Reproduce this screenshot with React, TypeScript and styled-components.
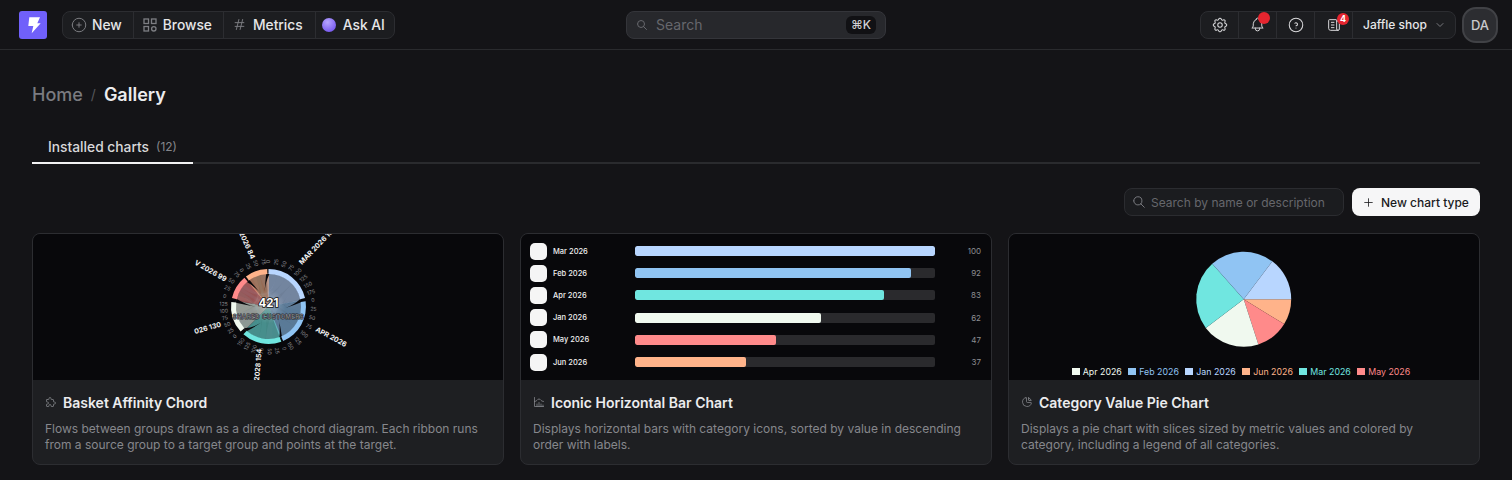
import React from 'react'
import styled, { createGlobalStyle } from 'styled-components'
import {
  TbBell,
  TbChartHistogram,
  TbChartPie,
  TbChevronDown,
  TbCirclePlus,
  TbHash,
  TbHelpCircle,
  TbNews,
  TbPlus,
  TbPuzzle,
  TbSearch,
  TbSettings,
} from 'react-icons/tb'

const GlobalStyle = createGlobalStyle`
  html, body {
    margin: 0;
    height: 100%;
    background: #141417;
    overflow: hidden;
  }
  body {
    font-family: Inter, "Liberation Sans", sans-serif;
    color: #e8e8ea;
  }
  * {
    box-sizing: border-box;
  }
`

const Header = styled.header`
  display: grid;
  grid-template-columns: 1fr 260px 1fr;
  align-items: center;
  height: 50px;
  padding: 0 14px;
  border-bottom: 1px solid #2a2b2e;
`

const HeaderLeft = styled.div`
  display: flex;
  align-items: center;
  gap: 15px;
  padding-left: 5px;
`

const HeaderRight = styled.div`
  display: flex;
  align-items: center;
  justify-content: flex-end;
  gap: 6px;
`

const Logo = styled.div`
  width: 28px;
  height: 28px;
  border-radius: 3px;
  background: #7060fa;
  svg {
    display: block;
  }
`

const ButtonGroup = styled.div`
  display: flex;
  height: 28px;
  border: 1px solid #2c2d31;
  border-radius: 8px;
  background: #1c1d20;
`

const NavButton = styled.div<{ $pad: string; $gap: number }>`
  display: flex;
  align-items: center;
  gap: ${( { $gap } ) => $gap}px;
  padding: ${( { $pad } ) => $pad};
  font-size: 13.8px;
  font-weight: 500;
  color: #e6e6e8;
  white-space: nowrap;
  & + & {
    border-left: 1px solid #2c2d31;
  }
  svg {
    flex: none;
    color: #7d7e83;
  }
`

const AiDot = styled.span`
  width: 14px;
  height: 14px;
  border-radius: 50%;
  background: radial-gradient(circle at 40% 30%, #b7a6ff, #7a5cf0 75%);
`

const IconButton = styled.div`
  position: relative;
  display: flex;
  align-items: center;
  justify-content: center;
  width: 38px;
  color: #d8d8da;
  &:first-child {
    width: 37px;
  }
  & + & {
    border-left: 1px solid #2c2d31;
  }
`

const RedDot = styled.span`
  position: absolute;
  top: 0;
  right: 6px;
  display: flex;
  align-items: center;
  justify-content: center;
  width: 12px;
  height: 12px;
  border-radius: 50%;
  background: #e5252f;
  color: #fff;
  font-size: 9px;
  font-weight: 700;
`

const CountBadge = styled( RedDot )`
  top: 1px;
  right: 3px;
`

const ProjectPicker = styled.div`
  display: flex;
  align-items: center;
  width: 103px;
  padding: 0 0 0 10px;
  border-left: 1px solid #2c2d31;
  font-size: 12px;
  font-weight: 500;
  color: #e6e6e8;
  white-space: nowrap;
  svg {
    margin-left: 7px;
    color: #77787d;
  }
`

const Avatar = styled.div`
  display: flex;
  align-items: center;
  justify-content: center;
  width: 36px;
  height: 36px;
  border: 2px solid #414246;
  border-radius: 14px;
  background: #2c2d31;
  color: #c9c9cc;
  font-size: 13px;
  font-weight: 500;
`

const GlobalSearch = styled.div`
  display: flex;
  align-items: center;
  height: 28px;
  padding: 0 9px 0 9px;
  border: 1px solid #34353a;
  border-radius: 8px;
  background: #27282c;
  color: #66676c;
  font-size: 14px;
  svg {
    margin-right: 8px;
  }
`

const Kbd = styled.span`
  display: flex;
  align-items: center;
  justify-content: center;
  width: 30px;
  height: 18px;
  margin-left: auto;
  border-radius: 6px;
  background: #111114;
  color: #d0d0d3;
  font-size: 12px;
  font-weight: 500;
`

const Main = styled.main`
  padding: 32px 32px 0;
`

const Breadcrumb = styled.div`
  display: flex;
  align-items: center;
  height: 24px;
  font-size: 18px;
  font-weight: 500;
  color: #7a7b80;
`

const Crumbsep = styled.span`
  margin: 0 8px 0 8px;
  font-size: 14px;
  font-weight: 400;
  color: #55565a;
`

const CrumbActive = styled.span`
  font-weight: 600;
  color: #ececee;
`

const Tabs = styled.div`
  display: flex;
  margin-top: 24px;
  border-bottom: 2px solid #2a2b2e;
`

const Tab = styled.div`
  display: flex;
  align-items: center;
  gap: 7px;
  height: 34px;
  margin-bottom: -2px;
  padding: 1px 16px 0 16px;
  border-bottom: 2px solid #f2f2f3;
  font-size: 13.8px;
  font-weight: 500;
  color: #d8d8da;
`

const TabCount = styled.span`
  font-size: 12px;
  font-weight: 400;
  color: #85868b;
`

const Toolbar = styled.div`
  display: flex;
  justify-content: flex-end;
  gap: 8px;
  margin-top: 24px;
`

const SearchField = styled.div`
  display: flex;
  align-items: center;
  gap: 5px;
  width: 220px;
  height: 28px;
  padding: 0 7px;
  border: 1px solid #2b2c30;
  border-radius: 8px;
  background: #1b1c1f;
  color: #66676c;
  font-size: 12px;
  svg {
    color: #85868b;
  }
`

const PrimaryButton = styled.div`
  display: flex;
  align-items: center;
  gap: 6px;
  width: 128px;
  height: 28px;
  padding-left: 10px;
  border-radius: 8px;
  background: #f6f6f7;
  color: #1a1a1d;
  font-size: 12px;
  font-weight: 500;
`

const CardGrid = styled.div`
  display: grid;
  grid-template-columns: repeat(3, 1fr);
  gap: 16px;
  margin-top: 17px;
`

const Card = styled.article`
  height: 232px;
  overflow: hidden;
  border: 1px solid #2c2d31;
  border-radius: 8px;
  background: #1e1f22;
`

const Preview = styled.div`
  display: flex;
  flex-direction: column;
  height: 146px;
  background: #08080b;
  overflow: hidden;
`

const CardBody = styled.div`
  padding: 13px 12px 0;
`

const CardTitle = styled.h3`
  display: flex;
  align-items: center;
  gap: 6px;
  height: 18px;
  margin: 0;
  font-size: 14px;
  font-weight: 600;
  color: #ececee;
  svg {
    color: #8a8b90;
  }
`

const CardText = styled.p`
  margin: 10px 0 0;
  font-size: 12px;
  line-height: 16px;
  color: #86878c;
`

const BarRows = styled.div`
  padding: 6px 10px 0 9px;
`

const BarRow = styled.div`
  display: grid;
  grid-template-columns: 17px 76px 300px 1fr;
  column-gap: 6px;
  align-items: center;
  height: 22.2px;
`

const BarIcon = styled.span`
  height: 17px;
  border-radius: 5px;
  background: #f5f5f5;
`

const BarLabel = styled.span`
  font-size: 7.5px;
  font-weight: 500;
  color: #f0f0f0;
`

const BarTrack = styled.div`
  height: 10px;
  border-radius: 2px;
  background: #2a2a2d;
  overflow: hidden;
`

const BarFill = styled.div<{ $color: string }>`
  height: 100%;
  border-radius: 2px;
  background: ${( { $color } ) => $color};
`

const BarValue = styled.span`
  font-size: 8px;
  text-align: right;
  color: #8d8e92;
`

const ChartSvg = styled.svg`
  flex: none;
  display: block;
`

const Legend = styled.div`
  display: flex;
  justify-content: center;
  gap: 6.5px;
  margin-right: 6px;
  margin-top: 2px;
`

const LegendItem = styled.span<{ $color: string }>`
  display: flex;
  align-items: center;
  gap: 3px;
  font-size: 8.8px;
  color: ${( { $color } ) => $color};
  &::before {
    content: '';
    width: 8px;
    height: 7px;
    background: ${( { $color } ) => $color};
  }
`

const LIGHT = '#b8d6ff'
const BLUE = '#90c4f3'
const TEAL = '#70e6e0'
const WHITE = '#f0f9ef'
const RED = '#ff8a8a'
const ORANGE = '#ffb38a'

const BARS = [
  { label: 'Mar 2026', value: 100, color: LIGHT },
  { label: 'Feb 2026', value: 92, color: BLUE },
  { label: 'Apr 2026', value: 83, color: TEAL },
  { label: 'Jan 2026', value: 62, color: WHITE },
  { label: 'May 2026', value: 47, color: RED },
  { label: 'Jun 2026', value: 37, color: ORANGE },
]

const LEGEND = [
  { label: 'Apr 2026', color: WHITE },
  { label: 'Feb 2026', color: BLUE },
  { label: 'Jan 2026', color: LIGHT },
  { label: 'Jun 2026', color: ORANGE },
  { label: 'Mar 2026', color: TEAL },
  { label: 'May 2026', color: RED },
]

// angles are degrees clockwise from 12 o'clock
function polar ( r: number, deg: number, cx = 0, cy = 0 ) {
  const a = ( ( deg - 90 ) * Math.PI ) / 180
  return { x: cx + r * Math.cos( a ), y: cy + r * Math.sin( a ) }
}

function arcPath ( r0: number, r1: number, a0: number, a1: number ) {
  const p0 = polar( r1, a0 )
  const p1 = polar( r1, a1 )
  const p2 = polar( r0, a1 )
  const p3 = polar( r0, a0 )
  const large = a1 - a0 > 180 ? 1 : 0
  return `M${p0.x} ${p0.y}A${r1} ${r1} 0 ${large} 1 ${p1.x} ${p1.y}L${p2.x} ${p2.y}A${r0} ${r0} 0 ${large} 0 ${p3.x} ${p3.y}Z`
}

function sectorPath ( r: number, a0: number, a1: number ) {
  const p0 = polar( r, a0 )
  const p1 = polar( r, a1 )
  return `M0 0L${p0.x} ${p0.y}A${r} ${r} 0 0 1 ${p1.x} ${p1.y}Z`
}

const GROUPS = [
  { a0: 0, a1: 77, color: LIGHT, max: 175 },
  { a0: 82, a1: 157, color: BLUE, max: 150 },
  { a0: 160, a1: 222, color: TEAL, max: 150 },
  { a0: 228, a1: 277, color: WHITE, max: 125 },
  { a0: 283, a1: 320, color: RED, max: 75 },
  { a0: 323, a1: 358, color: ORANGE, max: 75 },
]

// black wedges between the groups: angle at the ring and the point the tip leans to
const WEDGES = [
  { deg: 359, half: 3, tipR: 15, tipDeg: 345 },
  { deg: 79.5, half: 3, tipR: 17, tipDeg: 95 },
  { deg: 158.5, half: 2.5, tipR: 15, tipDeg: 140 },
  { deg: 225, half: 3.5, tipR: 18, tipDeg: 205 },
  { deg: 280, half: 3.5, tipR: 12, tipDeg: 268 },
  { deg: 321.5, half: 3, tipR: 14, tipDeg: 330 },
]

function wedgePath ( w: { deg: number; half: number; tipR: number; tipDeg: number } ) {
  const a = polar( 33, w.deg - w.half )
  const b = polar( 33, w.deg + w.half )
  const tip = polar( w.tipR, w.tipDeg )
  const mid = polar( ( w.tipR + 33 ) / 2, ( w.deg + w.tipDeg ) / 2 )
  return `M${a.x} ${a.y}Q${mid.x} ${mid.y} ${tip.x} ${tip.y}Q${mid.x} ${mid.y} ${b.x} ${b.y}Z`
}

function ribbons () {
  const n = GROUPS.length
  const part = ( g: number, other: number ) => {
    const slot = ( other - g + n ) % n // 1..5, nearest clockwise neighbour sits at the arc's end
    const { a0, a1 } = GROUPS[ g ]
    const w = ( a1 - a0 ) / ( n - 1 )
    return [ a1 - slot * w, a1 - ( slot - 1 ) * w ]
  }
  const out: { d: string; color: string }[] = []
  for ( let i = 0; i < n; i++ ) {
    for ( let j = i + 1; j < n; j++ ) {
      const [ s0, s1 ] = part( i, j )
      const [ t0, t1 ] = part( j, i )
      const R = 33
      const p0 = polar( R, s0 )
      const p1 = polar( R, s1 )
      const p2 = polar( R, t0 )
      const p3 = polar( R, t1 )
      out.push( {
        d: `M${p0.x} ${p0.y}A${R} ${R} 0 0 1 ${p1.x} ${p1.y}Q0 0 ${p2.x} ${p2.y}A${R} ${R} 0 0 1 ${p3.x} ${p3.y}Q0 0 ${p0.x} ${p0.y}Z`,
        color: GROUPS[ i ].color,
      } )
    }
  }
  return out
}

function ticks () {
  const out: { deg: number; label: number }[] = []
  GROUPS.forEach( ( g ) => {
    const step = ( ( g.a1 - g.a0 ) * 25 ) / ( g.max + 12 )
    for ( let v = 0; v <= g.max; v += 25 ) {
      out.push( { deg: g.a0 + ( v / 25 ) * step, label: v } )
    }
  } )
  return out
}

const OUTER_LABELS = [
  { text: 'MAR 2026 100', x: 302, y: 265, rot: -46 },
  { text: 'APR 2026', x: 315, y: 331, rot: 28 },
  { text: '2028 154', x: 259, y: 381, rot: -85 },
  { text: '026 130', x: 195, y: 334, rot: -16 },
  { text: 'V 2026 99', x: 194, y: 264, rot: 30 },
  { text: '2026 84', x: 239, y: 233, rot: 66 },
]

function ChordChart () {
  // labels are given in page coordinates, shifted here to the preview's corner
  const left = 33
  const top = 234
  return (
    <ChartSvg width={ 470 } height={ 146 } viewBox="0 0 470 146">
      <defs>
        <radialGradient id="chord-core">
          <stop offset="0%" stopColor="#fff" stopOpacity={ 0.3 } />
          <stop offset="100%" stopColor="#fff" stopOpacity={ 0 } />
        </radialGradient>
      </defs>
      <g transform={ `translate(${268.5 - left} ${306.5 - top})` }>
        { GROUPS.map( ( g, i ) => (
          <path key={ i } d={ sectorPath( 33, g.a0 - 3, g.a1 + 3 ) } fill={ g.color } fillOpacity={ 0.58 } />
        ) ) }
        { ribbons().map( ( r, i ) => (
          <path key={ i } d={ r.d } fill={ r.color } fillOpacity={ 0.07 } />
        ) ) }
        <circle r={ 17 } fill="url(#chord-core)" />
        { WEDGES.map( ( w, i ) => (
          <path key={ i } d={ wedgePath( w ) } fill="#08080b" />
        ) ) }
        { GROUPS.map( ( g, i ) => (
          <path key={ i } d={ arcPath( 32.5, 37.5, g.a0, g.a1 ) } fill={ g.color } />
        ) ) }
        { ticks().map( ( t, i ) => {
          const p = polar( 45, t.deg )
          const flip = t.deg > 180
          return (
            <text
              key={ i }
              x={ p.x }
              y={ p.y }
              fontSize={ 5.2 }
              fill="#8f8f93"
              textAnchor="middle"
              dominantBaseline="middle"
              transform={ `rotate(${flip ? t.deg + 90 : t.deg - 90} ${p.x} ${p.y})` }
            >
              { t.label }
            </text>
          )
        } ) }
        <text x={ 0 } y={ 0.5 } fontSize={ 11.5 } fontWeight={ 700 } fill="#fff" stroke="#111" strokeWidth={ 1.6 } paintOrder="stroke" textAnchor="middle">
          421
        </text>
        <text x={ 0 } y={ 12.5 } fontSize={ 5.8 } fontWeight={ 500 } letterSpacing={ 0.6 } fill="#8f8f93" stroke="#26262a" strokeWidth={ 1 } paintOrder="stroke" textAnchor="middle">
          SHARED CUSTOMERS
        </text>
      </g>
      { OUTER_LABELS.map( ( l ) => (
        <text
          key={ l.text }
          x={ l.x - left }
          y={ l.y - top }
          fontSize={ 7 }
          fontWeight={ 700 }
          fill="#f2f2f2"
          transform={ `rotate(${l.rot} ${l.x - left} ${l.y - top})` }
        >
          { l.text }
        </text>
      ) ) }
    </ChartSvg>
  )
}

const SLICES = [
  { from: 90, to: 121.5, color: ORANGE },
  { from: 121.5, to: 162, color: RED },
  { from: 162, to: 233, color: WHITE },
  { from: 233, to: 318.5, color: TEAL },
  { from: 318.5, to: 397, color: BLUE },
  { from: 397, to: 450, color: LIGHT },
]

function PieChart () {
  const r = 47.5
  return (
    <ChartSvg width={ 470 } height={ 130 } viewBox="0 0 470 130">
      { SLICES.map( ( s ) => {
        const a = polar( r, s.from, 234.7, 65.3 )
        const b = polar( r, s.to, 234.7, 65.3 )
        const large = s.to - s.from > 180 ? 1 : 0
        return (
          <path
            key={ s.color }
            d={ `M234.7 65.3L${a.x} ${a.y}A${r} ${r} 0 ${large} 1 ${b.x} ${b.y}Z` }
            fill={ s.color }
          />
        )
      } ) }
    </ChartSvg>
  )
}

function BarChart () {
  return (
    <BarRows>
      { BARS.map( ( b ) => (
        <BarRow key={ b.label }>
          <BarIcon />
          <BarLabel>{ b.label }</BarLabel>
          <BarTrack>
            <BarFill $color={ b.color } style={ { width: `${b.value}%` } } />
          </BarTrack>
          <BarValue>{ b.value }</BarValue>
        </BarRow>
      ) ) }
    </BarRows>
  )
}

export default function App () {
  return (
    <>
      <GlobalStyle />
      <Header>
        <HeaderLeft>
          <Logo>
            <svg width="28" height="28" viewBox="0 0 28 28">
              <path d="M10.3 6.3H21L18.3 12.3H21.7L12.7 22.3L14.3 15H9.3Z" fill="#fff" />
            </svg>
          </Logo>
          <ButtonGroup>
            <NavButton $pad="0 11px 0 7px" $gap={ 4 }>
              <TbCirclePlus size={ 18 } strokeWidth={ 1.3 } />
              New
            </NavButton>
            <NavButton $pad="0 11px 0 9px" $gap={ 6 }>
              <svg width="14" height="14" viewBox="0 0 14 14" fill="none" stroke="currentColor" strokeWidth="1.3">
                <rect x="1" y="1" width="4.5" height="4.5" />
                <rect x="8.5" y="1" width="4.5" height="4.5" />
                <rect x="1" y="8.5" width="4.5" height="4.5" />
                <circle cx="10.8" cy="10.8" r="2.2" />
              </svg>
              Browse
            </NavButton>
            <NavButton $pad="0 12px 0 8px" $gap={ 6 }>
              <TbHash size={ 15 } strokeWidth={ 1.5 } />
              Metrics
            </NavButton>
            <NavButton $pad="0 9px 0 6px" $gap={ 7 }>
              <AiDot />
              Ask AI
            </NavButton>
          </ButtonGroup>
        </HeaderLeft>
        <GlobalSearch>
          <TbSearch size={ 12 } />
          Search
          <Kbd>⌘K</Kbd>
        </GlobalSearch>
        <HeaderRight>
          <ButtonGroup>
            <IconButton>
              <TbSettings size={ 18 } strokeWidth={ 1.4 } />
            </IconButton>
            <IconButton>
              <TbBell size={ 17 } strokeWidth={ 1.4 } />
              <RedDot />
            </IconButton>
            <IconButton>
              <TbHelpCircle size={ 18 } strokeWidth={ 1.4 } />
            </IconButton>
            <IconButton>
              <TbNews size={ 16 } strokeWidth={ 1.5 } />
              <CountBadge>4</CountBadge>
            </IconButton>
            <ProjectPicker>
              Jaffle shop
              <TbChevronDown size={ 12 } />
            </ProjectPicker>
          </ButtonGroup>
          <Avatar>DA</Avatar>
        </HeaderRight>
      </Header>
      <Main>
        <Breadcrumb>
          Home
          <Crumbsep>/</Crumbsep>
          <CrumbActive>Gallery</CrumbActive>
        </Breadcrumb>
        <Tabs>
          <Tab>
            Installed charts
            <TabCount>(12)</TabCount>
          </Tab>
        </Tabs>
        <Toolbar>
          <SearchField>
            <TbSearch size={ 14 } strokeWidth={ 1.5 } />
            Search by name or description
          </SearchField>
          <PrimaryButton>
            <TbPlus size={ 13 } strokeWidth={ 1.5 } />
            New chart type
          </PrimaryButton>
        </Toolbar>
        <CardGrid>
          <Card>
            <Preview>
              <ChordChart />
            </Preview>
            <CardBody>
              <CardTitle>
                <TbPuzzle size={ 12 } strokeWidth={ 1.5 } />
                Basket Affinity Chord
              </CardTitle>
              <CardText>
                Flows between groups drawn as a directed chord diagram. Each ribbon runs from a source group to a target group and points at the target.
              </CardText>
            </CardBody>
          </Card>
          <Card>
            <Preview>
              <BarChart />
            </Preview>
            <CardBody>
              <CardTitle>
                <TbChartHistogram size={ 12 } strokeWidth={ 1.5 } />
                Iconic Horizontal Bar Chart
              </CardTitle>
              <CardText>
                Displays horizontal bars with category icons, sorted by value in descending order with labels.
              </CardText>
            </CardBody>
          </Card>
          <Card>
            <Preview>
              <PieChart />
              <Legend>
                { LEGEND.map( ( l ) => (
                  <LegendItem key={ l.label } $color={ l.color }>{ l.label }</LegendItem>
                ) ) }
              </Legend>
            </Preview>
            <CardBody>
              <CardTitle>
                <TbChartPie size={ 12 } strokeWidth={ 1.5 } />
                Category Value Pie Chart
              </CardTitle>
              <CardText>
                Displays a pie chart with slices sized by metric values and colored by category, including a legend of all categories.
              </CardText>
            </CardBody>
          </Card>
        </CardGrid>
      </Main>
    </>
  )
}
